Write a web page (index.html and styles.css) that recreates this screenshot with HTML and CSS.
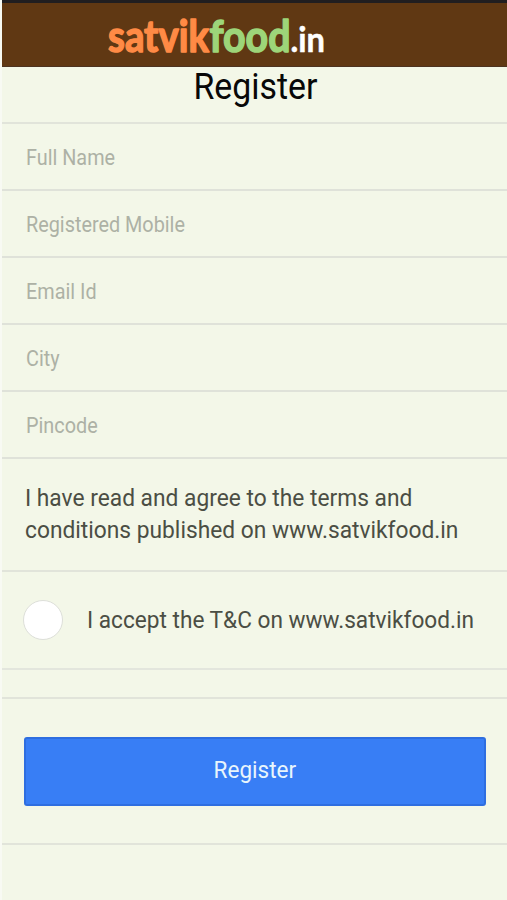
FILE: index.html
```html
<!DOCTYPE html>
<html lang="en">
<head>
<meta charset="utf-8">
<title>Register</title>
<link rel="stylesheet" href="styles.css">
</head>
<body>
<main class="app">
  <header class="topbar">
    <svg class="logo" width="224" height="44" viewBox="0 0 224 44" role="img" aria-label="satvikfood.in">
      <text class="logo-main logo-orange" x="3" y="36" textLength="101" lengthAdjust="spacingAndGlyphs">satvik</text>
      <text class="logo-main logo-green" x="104.5" y="36" textLength="81" lengthAdjust="spacingAndGlyphs">food</text>
      <text class="logo-tld" x="185.5" y="36" textLength="34.5" lengthAdjust="spacingAndGlyphs">.in</text>
    </svg>
  </header>
  <h1 class="title"><span>Register</span></h1>
  <form class="form">
    <label class="field"><span>Full Name</span></label>
    <label class="field"><span>Registered Mobile</span></label>
    <label class="field"><span>Email Id</span></label>
    <label class="field"><span>City</span></label>
    <label class="field"><span>Pincode</span></label>
    <p class="terms"><span>I have read and agree to the terms and<br>conditions published on www.satvikfood.in</span></p>
    <label class="accept"><i class="radio"></i><span>I accept the T&amp;C on www.satvikfood.in</span></label>
    <div class="spacer"></div>
    <div class="actions"><button class="submit" type="button"><span>Register</span></button></div>
  </form>
</main>
</body>
</html>
```
FILE: styles.css
```css
* { box-sizing: border-box; }
body {
  margin: 0;
  background: #f8faf3;
  font-family: Roboto, sans-serif;
}
.app {
  height: 900px;
  margin-left: 2px;
  background: #f3f7e8;
  overflow: hidden;
}
.topbar {
  height: 67px;
  padding: 13px 0 0 103px;
  background: #603813;
  border-top: 3px solid #211e20;
  border-bottom: 1px solid #4d3320;
}
.logo { display: block; overflow: visible; }
.logo-main {
  font: 700 43.5px Lato, sans-serif;
  stroke-width: 1.5;
  stroke-linejoin: round;
}
.logo-orange { fill: #ff8a45; stroke: #ff8a45; }
.logo-green { fill: #9dd579; stroke: #9dd579; }
.logo-tld {
  font: 700 34px Lato, sans-serif;
  fill: #fff;
  stroke: #fff;
  stroke-width: .5;
  stroke-linejoin: round;
}
.title {
  height: 57px;
  margin: 0;
  border-bottom: 2px solid #e1e4da;
  text-align: center;
  font-size: 36px;
  font-weight: 400;
  line-height: 41px;
  color: #080808;
}
.title span { display: inline-block; transform: translateX(.5px) scaleX(.94); }
.form { margin: 0; }
.field {
  display: flex;
  align-items: center;
  height: 67.1px;
  padding: 2px 0 0 24px;
  border-bottom: 2px solid #dfe2d9;
  font-size: 21.5px;
  color: #adb1a5;
}
.field span, .terms span, .accept span {
  display: inline-block;
  transform-origin: left;
  transform: scaleX(.922);
  white-space: nowrap;
}
.terms {
  height: 112.5px;
  margin: 0;
  padding: 23px 0 0 23px;
  border-bottom: 2px solid #e1e4da;
  font-size: 24.5px;
  line-height: 32px;
  color: #4b4e44;
}
.terms span { transform: scaleX(.929); }
.accept {
  display: flex;
  align-items: center;
  gap: 24px;
  height: 98px;
  padding-left: 21px;
  border-bottom: 2px solid #e3e6dd;
  font-size: 24.5px;
  color: #4b4e44;
}
.accept span { transform: scaleX(.924); }
.radio {
  width: 40px;
  height: 40px;
  border: 1px solid #dddfd9;
  border-radius: 50%;
  background: #fff;
}
.spacer { height: 29px; border-bottom: 2px solid #e1e4da; }
.actions {
  height: 146px;
  padding: 38px 21px 0 22px;
  border-bottom: 2px solid #e1e4da;
}
.submit {
  display: block;
  width: 100%;
  height: 69px;
  padding: 0 0 3px;
  border: 2px solid #2e6ee0;
  border-radius: 3px;
  background: #387ef5;
  font: 400 24.5px Roboto, sans-serif;
  color: #e8f5fc;
}
.submit span { display: inline-block; transform: scaleX(.92); }
```
